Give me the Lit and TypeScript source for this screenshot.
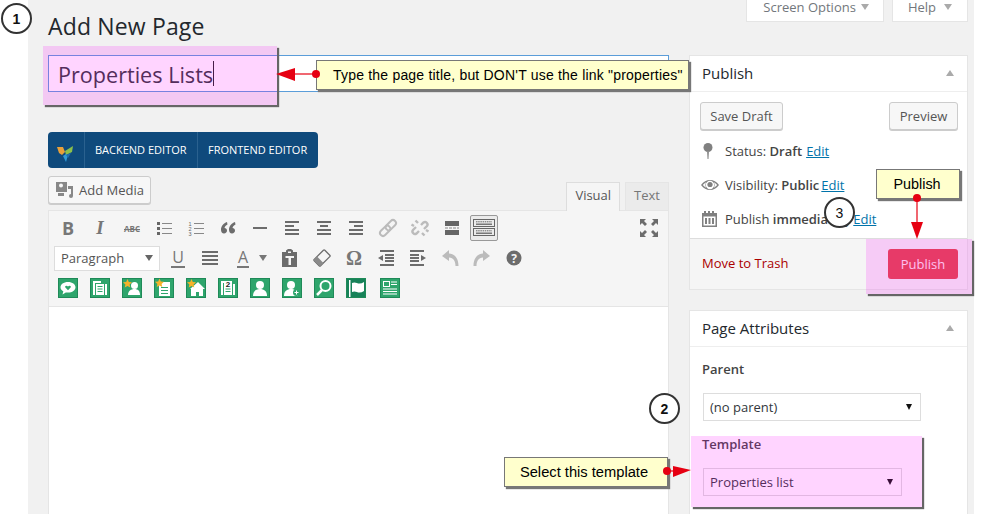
import { LitElement, html, css, svg } from 'lit';
import { customElement } from 'lit/decorators.js';

const G = '#6c6c6c';
const L = '#bbb';

const lines = (rows: number[][], fill = G) => rows.map(([x, y, w, h]) => svg`<rect x=${x} y=${y} width=${w} height=${h} fill=${fill}></rect>`);

const icons: Record<string, unknown> = {
    ul: svg`${lines([[3, 4, 3, 3], [3, 9, 3, 3], [3, 14, 3, 3]], '#666')}${lines([[8, 5, 10, 1], [8, 10, 10, 1], [8, 15, 10, 1]], '#888')}`,
    ol: svg`<text x="2.5" y="8" class="n">1</text><text x="2.5" y="13" class="n">2</text><text x="2.5" y="18" class="n">3</text>${lines([[8, 5, 10, 1], [8, 10, 10, 1], [8, 15, 10, 1]], '#888')}`,
    quote: svg`<path fill=${G} d="M9 4C5.500 5.500 3 8 3 11.700 3 14 4.200 15.500 6 15.500s3-1.300 3-2.900S7.900 10 6.500 10C6.800 8.500 7.800 7.300 9.500 6.400zM17 4c-3.500 1.500-6 4-6 7.700 0 2.300 1.200 3.800 3 3.800s3-1.300 3-2.900-1.100-2.600-2.500-2.600c.3-1.500 1.300-2.700 3-3.600z"/>`,
    hr: svg`${lines([[3, 9, 14, 2]])}`,
    left: svg`${lines([[3, 3, 14, 2], [3, 7, 9, 2], [3, 11, 14, 2], [3, 15, 14, 2]])}`,
    center: svg`${lines([[3, 3, 14, 2], [6, 7, 8, 2], [3, 11, 14, 2], [3, 15, 14, 2]])}`,
    right: svg`${lines([[3, 3, 14, 2], [8, 7, 9, 2], [3, 11, 14, 2], [3, 15, 14, 2]])}`,
    link: svg`<g fill="none" stroke=${L} stroke-width="2" transform="rotate(-45 10 10)"><rect x="0" y="7" width="12" height="6" rx="3"></rect><rect x="8" y="7" width="12" height="6" rx="3"></rect></g>`,
    unlink: svg`<g fill="none" stroke=${L} stroke-width="2.400"><path d="M8 5 5.500 2.500M4 8 1.500 6.500M12 15l2.500 2.500M16 12l2.500 1.500"/><path d="M9 13l-2.500 2.500a2.500 2.500 0 0 1-3.500-3.500L6 9M11 7l2.500-2.500a2.500 2.500 0 0 1 3.500 3.500L14 11"/></g>`,
    more: svg`${lines([[3, 3, 14, 5], [3, 12, 14, 5]], '#666')}${lines([[3, 9.500, 3, 1], [7, 9.500, 3, 1], [11, 9.500, 3, 1], [15, 9.500, 2, 1]], '#888')}`,
    kitchen: svg`<g fill="none" stroke="#666"><rect x="1.500" y="1.500" width="21" height="7"></rect><rect x="1.500" y="10.500" width="21" height="7"></rect><path stroke-dasharray="1.500 .7" d="M4 3.800h16M4 12.800h16"/></g><g fill="#777"><rect x="4" y="5.500" width="16" height="1.500"></rect><rect x="4" y="14.500" width="16" height="1.500"></rect></g>`,
    full: svg`<path fill=${G} d="M1 1h6L5 3l3 3-2 2-3-3-2 2zM19 1v6l-2-2-3 3-2-2 3-3-2-2zM1 19v-6l2 2 3-3 2 2-3 3 2 2zM19 19h-6l2-2-3-3 2-2 3 3 2-2z"/>`,
    justify: svg`${lines([[1, 3, 16, 2], [1, 7, 16, 2], [1, 11, 16, 2], [1, 15, 16, 2]])}`,
    paste: svg`<path fill=${G} fill-rule="evenodd" d="M2 4h4V2.500L8 1h3l2 1.500V4h4v15H2zM5.500 8v2h3v7h2.500v-7h3V8zM8 3.500V5h3V3.500z"/>`,
    eraser: svg`<g transform="rotate(-45 10 10)"><rect x="2.500" y="5.500" width="15" height="9" rx="1" fill="none" stroke=${G} stroke-width="1.300"></rect><rect x="2.500" y="5.500" width="5" height="9" fill="#8a8a8a"></rect></g>`,
    outdent: svg`<path fill=${G} d="M7 7v6L2 10z"/>${lines([[4, 2, 14, 2], [9, 6, 9, 2], [9, 9, 9, 2], [9, 12, 9, 2], [4, 16, 14, 2]])}`,
    indent: svg`<path fill=${G} d="M13 7v6l5-3z"/>${lines([[2, 2, 14, 2], [2, 6, 9, 2], [2, 9, 9, 2], [2, 12, 9, 2], [2, 16, 14, 2]])}`,
    undo: svg`<path fill=${L} d="M2 8l7-6v3.500c6 .5 9.500 5 9.500 12.500H15.500c0-5-2-8-6.500-8.500V13z"/>`,
    redo: svg`<path fill=${L} d="M18 8l-7-6v3.500C5 6 1.500 10.500 1.500 18H4.500c0-5 2-8 6.500-8.500V13z"/>`,
    help: svg`<circle cx="10" cy="10" r="7.500" fill=${G}></circle><text x="10" y="14.500" text-anchor="middle" class="q">?</text>`,
    pin: svg`<circle cx="7" cy="5.500" r="4.500" fill="#808080"></circle><path fill="#8c8c8c" d="M6 9h2l-.5 8h-1z"/>`,
    eye: svg`<g transform="translate(0 2)"><path fill="#808080" fill-rule="evenodd" d="M0 7c2.500-3.500 5.500-5 9-5s6.500 1.500 9 5c-2.500 3.500-5.500 5-9 5s-6.500-1.500-9-5zM9 2.800a4.200 4.200 0 1 0 0 8.400 4.200 4.200 0 0 0 0-8.400zM1.800 7c1 1.200 2.100 2.200 3.200 2.800A6 6 0 0 1 5 4.200C3.900 4.900 2.800 5.800 1.800 7zM13 4.200a6 6 0 0 1 0 5.600c1.100-.6 2.200-1.600 3.200-2.800-1-1.200-2.100-2.100-3.200-2.800z"/><circle cx="9" cy="6.500" r="2.600" fill="#808080"></circle></g>`,
    cal: svg`<path fill="#808080" fill-rule="evenodd" d="M1 3h2V1h2v2h2V1h2v2h2V1h2v2h3v14H1zM2.500 6.500V15.500h12V6.500zM4 8h2v6H4zM7.500 8h2v6h-2zM11 8h2v6h-2z"/>`,
};

const greens: unknown[] = [
    svg`<path fill="#fff" d="M10 4c4.400 0 7.500 2.300 7.500 5.300S14.400 14.600 10 14.600c-.8 0-1.500 0-2.200-.2L4.500 16.500l.8-3.200C3.500 12.300 2.500 11 2.500 9.300 2.500 6.300 5.600 4 10 4z"/><path fill="#2ea56c" d="M10 12.200 7.400 9.500c-1-1.200.9-2.700 2.600-1.100 1.700-1.600 3.600-.1 2.600 1.100z"/>`,
    svg`<path fill="#fff" d="M3 3h8v2H5v12H3zM6 6h8v11H6zM15 6h2v11h-2z"/><path fill="#2ea56c" d="M7.500 8h5v1h-5zM7.500 10.500h5v1h-5zM7.500 13h5v1h-5z"/>`,
    svg`<circle cx="12.500" cy="7.500" r="3.500" fill="#fff"></circle><path fill="#fff" d="M6 17c0-4 3-6 6.500-6s5.500 2 5.500 6z"/><path fill="#f5b32a" d="M5.500 1l1.300 3 3.200.3-2.400 2.100.7 3.100-2.800-1.600-2.800 1.600.7-3.100L1 4.300l3.200-.3z"/>`,
    svg`<path fill="#fff" d="M5 4h11v14H5z"/><path fill="#2ea56c" d="M7 9h7v1H7zM7 12h7v1H7zM7 15h7v1H7z"/><path fill="#f5b32a" d="M5.500 .5l1.300 3 3.200.3-2.400 2.100.7 3.100-2.800-1.600-2.800 1.600.7-3.100L1 3.800l3.200-.3z"/>`,
    svg`<path fill="#fff" d="M12 4l7 7h-2v7h-4v-4h-3v4H5v-7H4z"/><path fill="#f5b32a" d="M5.500 1l1.300 3 3.200.3-2.400 2.100.7 3.100-2.800-1.600-2.800 1.600.7-3.100L1 4.300l3.200-.3z"/>`,
    svg`<path fill="#fff" d="M3 3h3v2H5v12H3zM6 3h8v14H6zM15 6h2v11h-2z"/><path fill="#2ea56c" d="M7.500 10.500h5v1h-5zM7.500 13h5v1h-5z"/><text x="10" y="9" text-anchor="middle" class="t">2</text>`,
    svg`<circle cx="10" cy="7" r="4" fill="#fff"></circle><path fill="#fff" d="M3 18c0-5 3-7 7-7s7 2 7 7z"/>`,
    svg`<circle cx="9" cy="7" r="4" fill="#fff"></circle><path fill="#fff" d="M2 18c0-5 3-7 7-7s7 2 7 7z"/><circle cx="14.500" cy="14.500" r="3.500" fill="#2ea56c"></circle><path fill="#fff" d="M14 12.500h1v1.500h1.500v1H15v1.500h-1V15h-1.500v-1H14z"/>`,
    svg`<circle cx="11.500" cy="8" r="5" fill="none" stroke="#fff" stroke-width="2"></circle><path stroke="#fff" stroke-width="2.500" d="M8 12l-5 5"/>`,
    svg`<path fill="#fff" d="M3 2h1.500v17H3zM6 5c3-1.500 5 .5 7.500 .5 1.500 0 3-.5 4.500-1.500v9c-1.500 1-3 1.500-4.500 1.500-2.500 0-4.500-2-7.500-.5z"/>`,
    svg`<g fill="none" stroke="#fff"><rect x="3.500" y="3.500" width="6" height="5"></rect></g><path fill="#fff" d="M11 3.500h6v1h-6zM11 6h6v1h-6zM3 10.500h14v1H3zM3 13h14v1H3zM3 15.500h14v1H3z"/>`,
];

@customElement('app-root')
export class AppRoot extends LitElement {
    static styles = css`
        :host {
            display: block;
            position: relative;
            width: 981px;
            height: 517px;
            overflow: hidden;
            background: #fff;
            font-family: "Open Sans", sans-serif;
            font-size: 13px;
            color: #444;
        }
        .wrap {
            box-sizing: border-box;
            width: 946px;
            height: 514px;
            margin-left: 28px;
            padding: 0 6px 0 20px;
            background: #f1f1f1;
            overflow: hidden;
        }
        .top {
            display: flex;
            justify-content: space-between;
            height: 55px;
        }
        h1 {
            margin: 0;
            padding-top: 10px;
            font-size: 23px;
            line-height: 32px;
            font-weight: 400;
            letter-spacing: 0.15px;
            color: #23282d;
        }
        .screen {
            display: flex;
            gap: 8px;
            height: 22px;
        }
        .tab {
            display: flex;
            align-items: center;
            gap: 8px;
            padding: 0 15px 7px;
            height: 14px;
            background: #fff;
            border: 1px solid #e5e5e5;
            border-top: 0;
            color: #72777c;
        }
        .tab.so {
            padding: 0 14px 7px 16px;
            gap: 5px;
        }
        .caret {
            width: 0;
            height: 0;
            border: 4px solid transparent;
            border-top: 6px solid #aaa;
            border-bottom: 0;
        }
        .columns {
            display: flex;
            gap: 20px;
        }
        .main {
            width: 621px;
            flex: none;
        }
        .side {
            width: 279px;
            flex: none;
        }
        .title {
            box-sizing: border-box;
            height: 37px;
            margin-bottom: 40px;
            padding: 0 0 0 9px;
            background: #fff;
            border: 1px solid #5b9dd9;
            font-size: 21.6px;
            color: #32373c;
            display: flex;
            align-items: center;
        }
        .title-text {
            position: relative;
            top: 1px;
        }
        .text-caret {
            width: 1px;
            height: 25px;
            background: #222;
        }
        .vc {
            display: flex;
            width: 270px;
            height: 36px;
            margin-bottom: 8px;
            background: #0f4a7c;
            border-radius: 4px;
            color: #fff;
            font-size: 11px;
            line-height: 36px;
            white-space: nowrap;
        }
        .vc > div {
            border-left: 1px solid #2a618f;
            padding-left: 10px;
        }
        .vc > .logo {
            box-sizing: border-box;
            width: 36px;
            padding: 9px 0 0 9px;
            border: 0;
        }
        .vc > .be {
            width: 102px;
        }
        .media {
            display: flex;
            justify-content: space-between;
            align-items: flex-end;
            height: 34px;
        }
        .btn {
            box-sizing: border-box;
            display: inline-flex;
            align-items: center;
            justify-content: center;
            height: 28px;
            background: #f7f7f7;
            border: 1px solid #ccc;
            border-radius: 3px;
            box-shadow: 0 1px 0 #ccc;
            color: #555;
        }
        .add {
            width: 103px;
            gap: 4px;
            margin-bottom: 6px;
        }
        .tabs {
            display: flex;
            gap: 5px;
        }
        .etab {
            box-sizing: border-box;
            height: 28px;
            padding: 0 8px;
            line-height: 25px;
            border: 1px solid #e5e5e5;
            border-bottom: 0;
            background: #ebebeb;
            color: #777;
        }
        .etab.on {
            background: #f5f5f5;
            color: #555;
            border-color: #ddd;
            margin-bottom: -1px;
            height: 29px;
        }
        .editor {
            border: 1px solid #e5e5e5;
            background: #fff;
            height: 320px;
        }
        .bars {
            box-sizing: border-box;
            height: 96px;
            padding: 2px 3px 0;
            background: #f5f5f5;
            border-bottom: 1px solid #e5e5e5;
        }
        .row {
            display: flex;
            align-items: center;
            height: 30px;
        }
        .i {
            flex: none;
            width: 32px;
            height: 26px;
            display: flex;
            align-items: center;
            justify-content: center;
            color: #777;
        }
        .i svg {
            width: 20px;
            height: 20px;
        }
        .i.active svg {
            width: 24px;
            height: 20px;
        }
        .i.active > span {
            box-sizing: border-box;
            width: 28px;
            height: 26px;
            display: flex;
            align-items: center;
            justify-content: center;
            background: #ebebeb;
            border: 1px solid #999;
            border-radius: 2px;
        }
        .gap {
            margin-left: auto;
        }
        .b {
            font: 700 18px "Open Sans", sans-serif;
        }
        .it {
            font: italic 700 19px "Liberation Serif", serif;
        }
        .abc {
            font: 700 8px "Open Sans", sans-serif;
            text-decoration: line-through;
        }
        .u {
            font: 400 16px "Open Sans", sans-serif;
            border-bottom: 2px solid #777;
            line-height: 17px;
            padding: 0 1px;
        }
        .om {
            font: 700 20px "Liberation Serif", serif;
        }
        .i.wide {
            width: 33px;
        }
        .drop {
            flex: none;
            width: 15px;
            display: flex;
        }
        .drop .caret {
            border-top-color: #777;
        }
        .sel {
            box-sizing: border-box;
            flex: none;
            display: flex;
            align-items: center;
            justify-content: space-between;
            width: 106px;
            height: 25px;
            margin: 0 2px 0 2px;
            padding: 0 6px;
            background: #fff;
            border: 1px solid #ddd;
            color: #555;
        }
        .sel .caret {
            border-top-color: #666;
        }
        .g {
            flex: none;
            width: 20px;
            height: 20px;
            margin: 0 6px;
            background: #2ea56c;
            box-shadow: inset 0 0 0 1px #1f8a58;
        }
        .g.flag {
            background: #178259;
        }
        .g.last {
            margin-left: 8px;
        }
        .g .t {
            font: 700 8px "Liberation Sans", sans-serif;
            fill: #222;
        }
        .n {
            font: 5.500px "Liberation Sans", sans-serif;
            fill: #666;
        }
        .q {
            font: 700 12px "Open Sans", sans-serif;
            fill: #f5f5f5;
        }
        .box {
            background: #fff;
            border: 1px solid #e5e5e5;
            margin-bottom: 20px;
        }
        .head {
            display: flex;
            align-items: center;
            justify-content: space-between;
            height: 33px;
            padding: 0 13px 2px 12px;
            border-bottom: 1px solid #eee;
            font-size: 15px;
            color: #23282d;
        }
        .head i {
            width: 0;
            height: 0;
            border: 4px solid transparent;
            border-bottom: 6px solid #aaa;
            border-top: 0;
        }
        .acts {
            display: flex;
            justify-content: space-between;
            padding: 10px 9px 0 10px;
        }
        .save {
            width: 83px;
        }
        .prev {
            width: 69px;
        }
        .misc {
            padding-top: 4px;
            height: 108px;
            box-sizing: border-box;
        }
        .st {
            display: flex;
            align-items: center;
            height: 34px;
            padding-left: 11px;
        }
        .ic {
            width: 24px;
            flex: none;
            display: flex;
        }
        .ic svg {
            width: 18px;
            height: 18px;
        }
        .st b {
            font-weight: 600;
        }
        a {
            color: #0073aa;
            text-decoration: underline;
            margin-left: 4px;
        }
        .st.tight a {
            margin-left: 2px;
        }
        .foot {
            box-sizing: border-box;
            display: flex;
            align-items: center;
            justify-content: space-between;
            height: 51px;
            padding: 0 9px 0 12px;
            background: #f5f5f5;
            border-top: 1px solid #ddd;
            color: #a00;
        }
        .trash {
            margin-bottom: 2px;
        }
        .pub {
            box-sizing: border-box;
            display: flex;
            align-items: center;
            justify-content: center;
            width: 70px;
            height: 30px;
            background: #e3464a;
            border-radius: 3px;
            color: #fde7ee;
        }
        .attrs {
            padding: 12px 12px 0 13px;
        }
        .lbl {
            font-weight: 600;
            line-height: 20px;
            color: #444;
            margin-left: -1px;
        }
        .lbl.order {
            margin-top: 15px;
        }
        .pick {
            box-sizing: border-box;
            display: flex;
            align-items: center;
            justify-content: space-between;
            height: 28px;
            margin: 14px 0 13px;
            padding: 0 8px 0 6px;
            border: 1px solid #ddd;
            color: #32373c;
            width: 218px;
        }
        .pick.t2 {
            width: 199px;
            margin-bottom: 0;
        }
        .pick i {
            width: 0;
            height: 0;
            border: 3.500px solid transparent;
            border-top: 6px solid #111;
            border-bottom: 0;
        }
        .note {
            position: absolute;
            box-sizing: border-box;
            display: flex;
            align-items: center;
            justify-content: center;
            background: #ffffcd;
            border: 1px solid #777;
            box-shadow: 2px 2px 1px #777;
            font: 14px "Liberation Sans", Arial, sans-serif;
            color: #000;
        }
        .n1 {
            left: 316px;
            top: 60px;
            width: 373px;
            height: 30px;
            justify-content: flex-start;
            padding-left: 16px;
            white-space: nowrap;
            letter-spacing: 0.2px;
        }
        .n2 {
            left: 876px;
            top: 169px;
            width: 84px;
            height: 30px;
            font-size: 14.4px;
            padding-right: 2px;
        }
        .n3 {
            left: 504px;
            top: 457px;
            width: 164px;
            height: 30px;
            font-size: 14.7px;
            padding-right: 4px;
        }
        .hl {
            position: absolute;
            background: rgba(255, 0, 255, 0.17);
            box-shadow: 2px 2px 1px #666;
        }
        .h1 {
            left: 43px;
            top: 46px;
            width: 234px;
            height: 59px;
        }
        .h2 {
            left: 866px;
            top: 239px;
            width: 106px;
            height: 55px;
        }
        .h3 {
            left: 691px;
            top: 436px;
            width: 231px;
            height: 71px;
        }
        .step {
            position: absolute;
            box-sizing: border-box;
            width: 31px;
            height: 31px;
            display: flex;
            align-items: center;
            justify-content: center;
            background: #fff;
            border: 2px solid #333;
            border-radius: 50%;
            font: 700 14px "Liberation Sans", Arial, sans-serif;
            color: #111;
        }
        .s1 {
            left: 1px;
            top: 3px;
        }
        .s2 {
            left: 649px;
            top: 393px;
        }
        .s3 {
            left: 824px;
            top: 197px;
            font-weight: 400;
        }
        .arrows {
            position: absolute;
            left: 0;
            top: 0;
            width: 981px;
            height: 517px;
            pointer-events: none;
        }
    `;

    private icon(name: string, cls = '') {
        return html`<span class="i ${cls}"><svg viewBox="0 0 20 20">${icons[name]}</svg></span>`;
    }

    render() {
        return html`
            <div class="wrap">
                <div class="top">
                    <h1>Add New Page</h1>
                    <div class="screen">
                        <div class="tab so">Screen Options <span class="caret"></span></div>
                        <div class="tab">Help <span class="caret"></span></div>
                    </div>
                </div>
                <div class="columns">
                    <div class="main">
                        <div class="title"><span class="title-text">Properties Lists</span><span class="text-caret"></span></div>
                        <div class="vc">
                            <div class="logo">
                                <svg width="18" height="18" viewBox="0 0 18 18">
                                    <path fill="#e8a03a" d="M0 2l6 0 2 5-3 3-3-2z"/>
                                    <path fill="#8cc04b" d="M8 6l8-5-1 6-6 3z"/>
                                    <path fill="#2f9ad6" d="M6 11l3-2 2 1-2 7z"/>
                                    <path fill="#1f6fb0" d="M9 10l5-2-3 5z"/>
                                </svg>
                            </div>
                            <div class="be">BACKEND EDITOR</div>
                            <div>FRONTEND EDITOR</div>
                        </div>
                        <div class="media">
                            <div class="btn add">
                                <svg width="20" height="18" viewBox="0 0 20 18">
                                    <path fill="#888" fill-rule="evenodd" d="M1 1h11v10H1zM4 4.500a2 2 0 1 0 4 0 2 2 0 0 0-4 0z"/>
                                    <path fill="#888" d="M3 12h6v3H3zM13 5h5v10a2 2 0 1 1-2-2V8h-3z"/>
                                </svg>
                                Add Media
                            </div>
                            <div class="tabs">
                                <div class="etab on">Visual</div>
                                <div class="etab">Text</div>
                            </div>
                        </div>
                        <div class="editor">
                            <div class="bars">
                                <div class="row">
                                    <span class="i"><span class="b">B</span></span>
                                    <span class="i"><span class="it">I</span></span>
                                    <span class="i"><span class="abc">ABC</span></span>
                                    ${['ul', 'ol', 'quote', 'hr', 'left', 'center', 'right', 'link', 'unlink', 'more'].map(n => this.icon(n))}
                                    <span class="i active"><span><svg viewBox="0 0 24 20">${icons.kitchen}</svg></span></span>
                                    <span class="gap"></span>
                                    ${this.icon('full')}
                                </div>
                                <div class="row">
                                    <div class="sel">Paragraph <span class="caret"></span></div>
                                    <span class="i"><span class="u">U</span></span>
                                    ${this.icon('justify', 'wide')}
                                    <span class="i"><span class="u">A</span></span>
                                    <span class="drop"><span class="caret"></span></span>
                                    ${['paste', 'eraser'].map(n => this.icon(n))}
                                    <span class="i"><span class="om">Ω</span></span>
                                    ${['outdent', 'indent', 'undo', 'redo', 'help'].map(n => this.icon(n))}
                                </div>
                                <div class="row">
                                    ${greens.map((g, i) => html`<svg class="g ${i === 9 ? 'flag' : ''} ${i === 10 ? 'last' : ''}" viewBox="0 0 20 20">${g}</svg>`)}
                                </div>
                            </div>
                        </div>
                    </div>
                    <div class="side">
                        <div class="box">
                            <div class="head">Publish <i></i></div>
                            <div class="acts">
                                <div class="btn save">Save Draft</div>
                                <div class="btn prev">Preview</div>
                            </div>
                            <div class="misc">
                                <div class="st"><span class="ic"><svg viewBox="0 0 18 18">${icons.pin}</svg></span>Status:&nbsp;<b>Draft</b><a>Edit</a></div>
                                <div class="st tight"><span class="ic"><svg viewBox="0 0 18 18">${icons.eye}</svg></span>Visibility:&nbsp;<b>Public</b><a>Edit</a></div>
                                <div class="st tight"><span class="ic"><svg viewBox="0 0 18 18">${icons.cal}</svg></span>Publish&nbsp;<b>immediately</b><a>Edit</a></div>
                            </div>
                            <div class="foot">
                                <span class="trash">Move to Trash</span>
                                <div class="pub">Publish</div>
                            </div>
                        </div>
                        <div class="box">
                            <div class="head">Page Attributes <i></i></div>
                            <div class="attrs">
                                <div class="lbl">Parent</div>
                                <div class="pick">(no parent) <i></i></div>
                                <div class="lbl">Template</div>
                                <div class="pick t2">Properties list <i></i></div>
                                <div class="lbl order">Order</div>
                            </div>
                        </div>
                    </div>
                </div>
            </div>

            <div class="hl h1"></div>
            <div class="hl h2"></div>
            <div class="hl h3"></div>
            <div class="note n1">Type the page title, but DON'T use the link "properties"</div>
            <div class="note n2">Publish</div>
            <div class="note n3">Select this template</div>
            <div class="step s1">1</div>
            <div class="step s2">2</div>
            <div class="step s3">3</div>
            <svg class="arrows" viewBox="0 0 981 517">
                <g fill="#e60012" stroke="#e60012">
                    <path d="M316 74H292" stroke-width="1.200"/>
                    <circle cx="316" cy="74" r="4" stroke="none"></circle>
                    <path d="M276 74l19-6v13z" stroke="none"/>
                    <path d="M917 198V224" stroke-width="1.200"/>
                    <circle cx="917" cy="198" r="4" stroke="none"></circle>
                    <path d="M917 239l-6-17h12z" stroke="none"/>
                    <path d="M667 471H676" stroke-width="1.200"/>
                    <circle cx="667" cy="471" r="4" stroke="none"></circle>
                    <path d="M691 470l-18-4v11z" stroke="none"/>
                </g>
            </svg>
        `;
    }
}
